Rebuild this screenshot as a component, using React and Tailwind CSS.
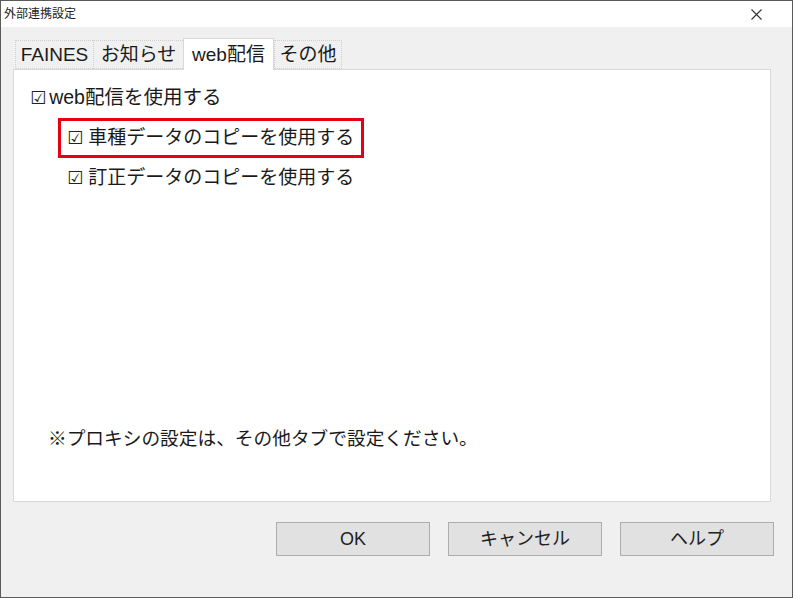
// App.jsx — 外部連携設定 dialog, web配信 tab selected. Static UI only.

const FONT = { fontFamily: '"Liberation Sans", "Noto Sans CJK JP", "DejaVu Sans", sans-serif' }

const TABS = [
  { label: 'FAINES', w: 'w-[78px]' },
  { label: 'お知らせ', w: 'w-[90px]' },
  { label: 'web配信', w: 'w-[91px]', active: true },
  { label: 'その他', w: 'w-[68px]' },
]

function Check() {
  return <span className="mr-[3px] text-[18px] leading-none text-[#222]">☑</span>
}

function DialogButton({ children }) {
  return (
    <button className="h-[34px] w-[154px] border border-[#adadad] bg-[#e1e1e1] text-[18px] font-normal text-[#222]">
      {children}
    </button>
  )
}

export default function App() {
  return (
    <div
      className="flex h-[598px] w-[793px] flex-col border border-[#5a5a5a] bg-[#f0f0f0] text-[#1a1a1a]"
      style={FONT}
    >
      {/* Title bar */}
      <div className="flex h-[26px] shrink-0 items-center justify-between bg-white pl-[3px] pr-[30px]">
        <span className="text-[12px] text-[#222]">外部連携設定</span>
        <svg width="11" height="11" viewBox="0 0 11 11" className="mt-[1px]">
          <path d="M0.5 0.5 L10.5 10.5 M10.5 0.5 L0.5 10.5" stroke="#333" strokeWidth="1.1" fill="none" />
        </svg>
      </div>

      {/* Tabs */}
      <div className="ml-[14px] mt-[11px] flex h-[31px] items-end">
        {TABS.map((t) =>
          t.active ? (
            <div
              key={t.label}
              className={`${t.w} relative z-10 -mb-px flex h-[32px] items-center justify-center border border-b-0 border-[#d9d9d9] bg-white text-[19px] leading-none`}
            >
              {t.label}
            </div>
          ) : (
            <div
              key={t.label}
              className={`${t.w} flex h-[29px] items-center justify-center border border-r-0 border-dotted border-[#cfcfcf] bg-[#f0f0f0] text-[19px] leading-none last:border-r`}
            >
              {t.label}
            </div>
          )
        )}
      </div>

      {/* Tab panel */}
      <div className="ml-[12px] mr-[21px] flex h-[433px] flex-col border border-[#d9d9d9] bg-white pl-[16px] pt-[8px]">
        <div className="flex h-[40px] items-center text-[19.5px]">
          <Check />
          web配信を使用する
        </div>
        <div className="ml-[28px] flex h-[40px] w-[306px] items-center border-[3px] border-[#e60012] pl-[6px] text-[19px]">
          <Check />
          <span className="ml-[2px]">車種データのコピーを使用する</span>
        </div>
        <div className="ml-[28px] flex h-[40px] items-center pl-[9px] text-[19px]">
          <Check />
          <span className="ml-[2px]">訂正データのコピーを使用する</span>
        </div>

        <div className="flex-1" />

        <div className="mb-[42px] ml-[18px] flex h-[40px] items-center text-[18.7px]">
          ※プロキシの設定は、その他タブで設定ください。
        </div>
      </div>

      {/* Buttons */}
      <div className="mt-[20px] flex justify-end gap-[18px] pr-[18px]">
        <DialogButton>OK</DialogButton>
        <DialogButton>キャンセル</DialogButton>
        <DialogButton>ヘルプ</DialogButton>
      </div>
    </div>
  )
}
